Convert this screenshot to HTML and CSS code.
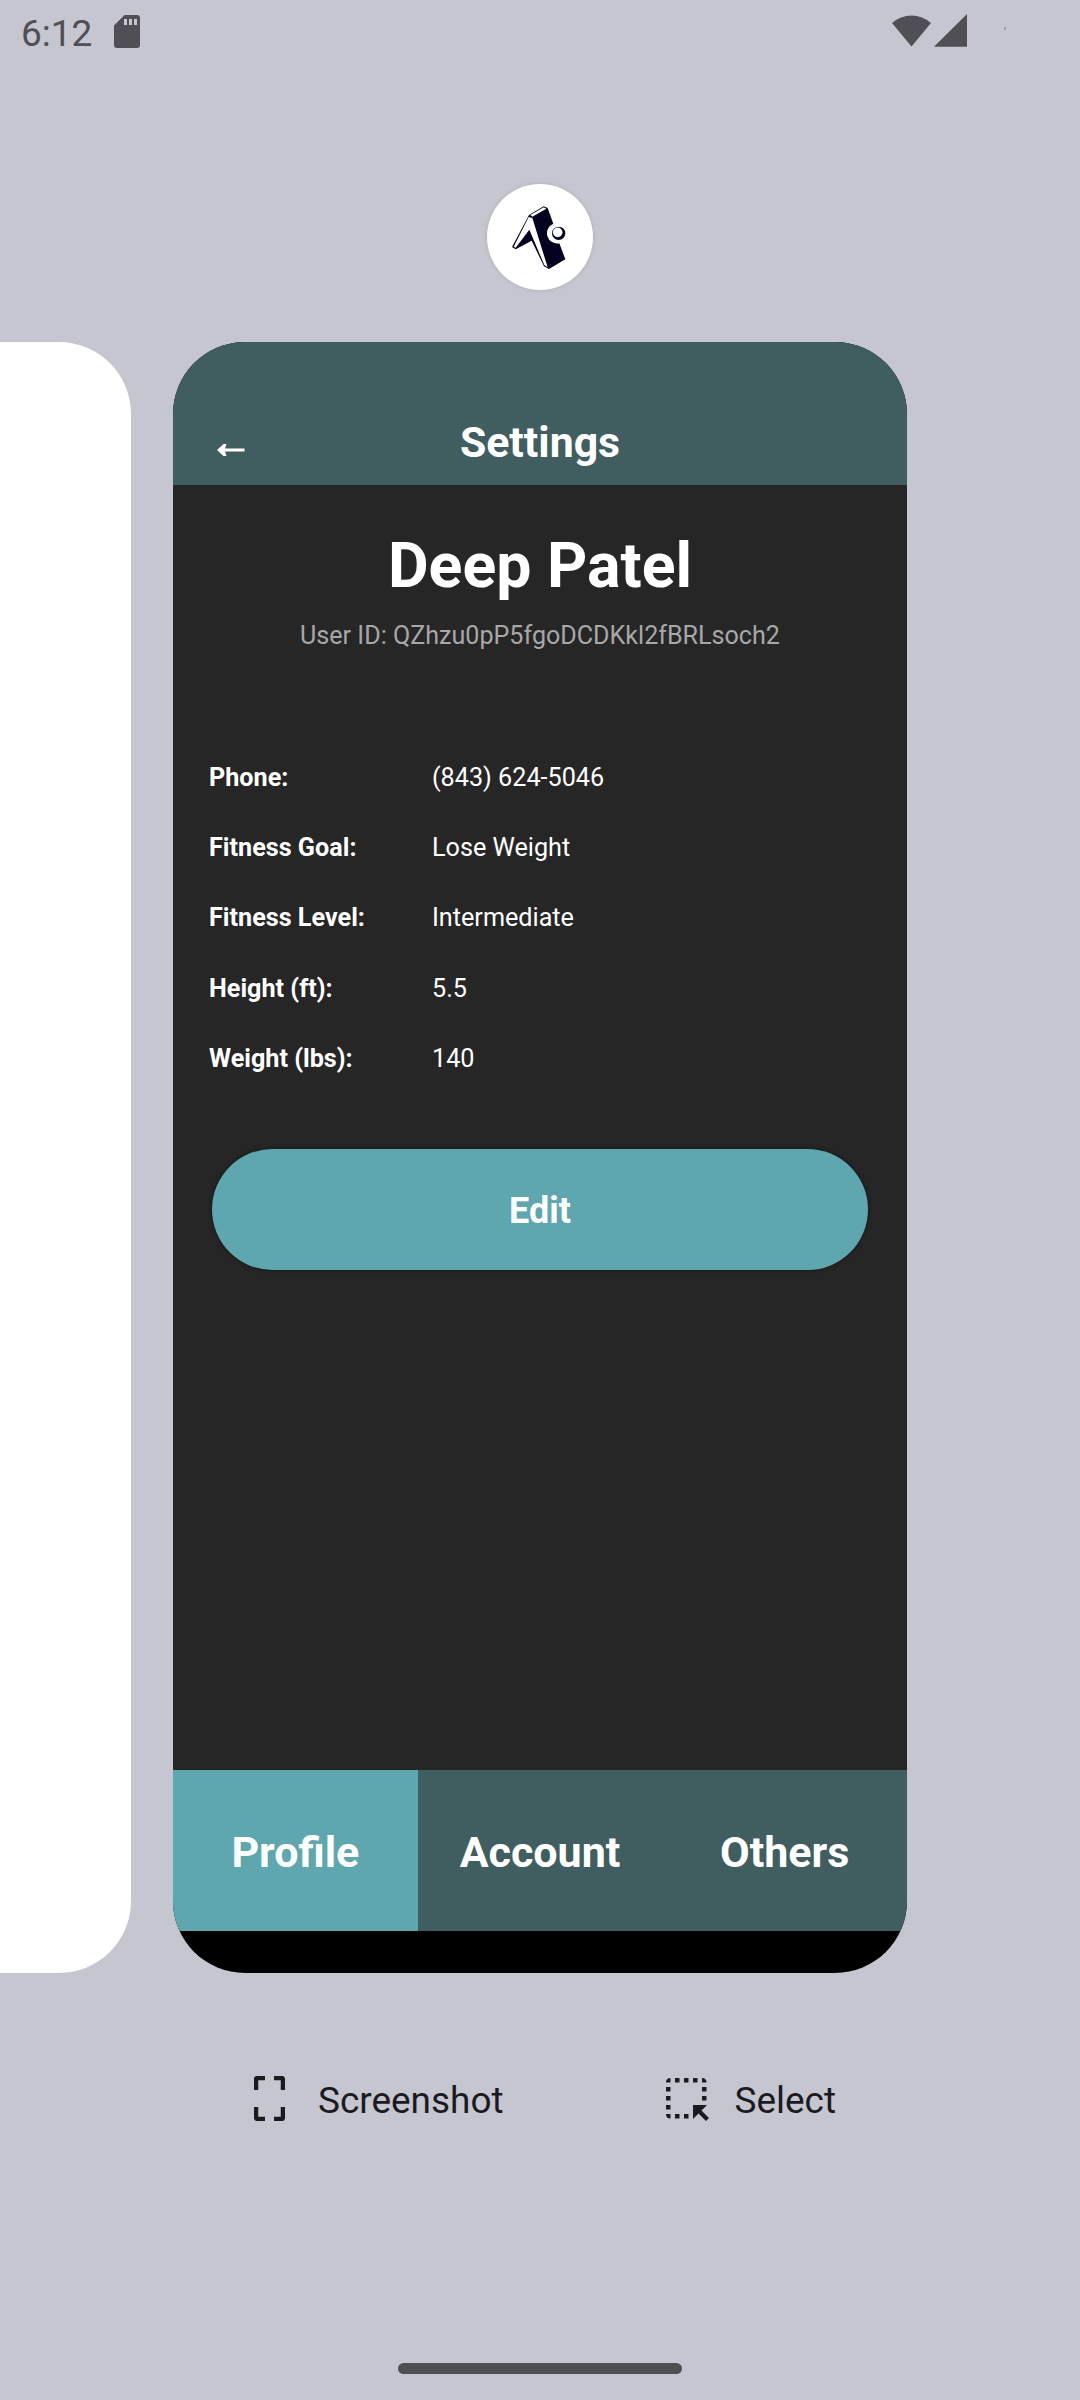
FILE: index.html
```html
<!DOCTYPE html>
<html lang="en">
<head>
<meta charset="utf-8">
<title>Recent apps</title>
<link rel="stylesheet" href="styles.css">
</head>
<body>
<div class="screen">
  <header class="status">
    <span class="clock">6:12</span>
    <svg class="sd" viewBox="0 0 26 33"><path fill-rule="evenodd" d="M10.5 0H23a3 3 0 0 1 3 3V30a3 3 0 0 1-3 3H3a3 3 0 0 1-3-3V10.500ZM10 4v6h3V4ZM15 4v6h3V4ZM20 4v6h3V4Z"/></svg>
    <svg class="signals" viewBox="0 0 115 33"><path d="M0 9A29 29 0 0 1 39 9L19.500 32.500Z"/><path d="M75 0V32.700H42Z"/><path class="dot" d="M112 13h2v3h-2z"/></svg>
  </header>
  <div class="app-icon">
    <svg viewBox="51 41 318 318">
      <path class="ink" d="M187 141L233 113L250 160A31 31 0 0 0 268 219L286 267L237 296L222 288L185 211L137 237L126 230L177 134L221 108L233 113Z"/>
      <path class="paper" d="M181 134L221 111L229 115L187 139Z"/>
      <path class="paper" d="M176 140L131 229L137 232L178 178L223 284L233 291L187 143Z"/>
      <circle class="paper" cx="266" cy="189" r="30"/>
      <circle class="ink" cx="266" cy="189" r="20"/>
      <circle class="paper" cx="263" cy="186" r="14.500"/>
    </svg>
  </div>
  <main class="recents">
    <div class="previous"></div>
    <section class="card">
      <div class="title-bar">
        <svg class="back" viewBox="0 0 28 12"><path d="M0 6L6.500 0H9.500L8 4.500H27.500V7.500H8L9.500 12H6.500Z"/></svg>
        <h1>Settings</h1>
      </div>
      <div class="profile">
        <h2>Deep Patel</h2>
        <p class="user-id">User ID: QZhzu0pP5fgoDCDKkl2fBRLsoch2</p>
        <dl class="details">
          <dt>Phone:</dt><dd>(843) 624-5046</dd>
          <dt>Fitness Goal:</dt><dd>Lose Weight</dd>
          <dt>Fitness Level:</dt><dd>Intermediate</dd>
          <dt>Height (ft):</dt><dd>5.5</dd>
          <dt>Weight (lbs):</dt><dd>140</dd>
        </dl>
        <button class="edit">Edit</button>
      </div>
      <nav class="tabs">
        <span class="tab active">Profile</span>
        <span class="tab">Account</span>
        <span class="tab">Others</span>
      </nav>
    </section>
  </main>
  <div class="actions">
    <div class="action">
      <svg class="shot-icon" viewBox="0 0 31 45"><path d="M2 14V4Q2 2 4 2H11M20 2H27Q29 2 29 4V14M29 31V41Q29 43 27 43H20M11 43H4Q2 43 2 41V31"/></svg>
      <span>Screenshot</span>
    </div>
    <div class="action">
      <svg class="select-icon" viewBox="0 0 43 43"><path d="M4.500 0V4.500H0Q0 0 4.500 0ZM9 0h4.500v4.500H9zM18 0h4.500v4.500H18zM27 0h4.500v4.500H27zM36 0V4.500H40.500Q40.500 0 36 0ZM0 9h4.500v4.500H0zM0 18h4.500v4.500H0zM0 27h4.500v4.500H0zM0 36H4.500V40.500Q0 40.500 0 36ZM36 9h4.500v4.500H36zM36 18h4.500v4.500H36zM9 36h4.500v4.500H9zM18 36h4.500v4.500H18zM27 27H41L35.500 32.500L43 40L40 43L32.500 35.500L27 41Z"/></svg>
      <span>Select</span>
    </div>
  </div>
  <div class="home-bar"></div>
</div>
</body>
</html>
```
FILE: styles.css
```css
* { box-sizing: border-box; }
body { margin: 0; background: #c6c6d0; font-family: Roboto, sans-serif; }
h1, h2, p, dl, dd { margin: 0; }
svg { display: block; flex: none; }

.screen {
  width: 1080px;
  height: 2400px;
  overflow: hidden;
  display: flex;
  flex-direction: column;
}

.status {
  height: 184px;
  padding: 14px 73px 0 21px;
  display: flex;
  align-items: flex-start;
  color: #4f4f54;
  fill: #4f4f54;
}
.clock { width: 93px; font-size: 37px; line-height: 39px; }
.sd { width: 26px; height: 33px; margin-top: 1px; }
.signals { width: 115px; height: 33px; margin-left: auto; }
.dot { fill: #a2a2aa; }

.app-icon {
  align-self: center;
  width: 106px;
  height: 106px;
  border-radius: 50%;
  background: #fff;
  box-shadow: 0 0 4px rgba(0, 0, 0, .12);
}
.ink { fill: #020220; }
.paper { fill: #fff; }

.recents {
  margin-top: 52px;
  height: 1631px;
  display: flex;
  gap: 42px;
}
.previous { width: 131px; background: #fff; border-radius: 0 72px 72px 0; }
.card {
  width: 734px;
  border-radius: 72px;
  overflow: hidden;
  background: #000;
  color: #fff;
  display: flex;
  flex-direction: column;
}

.title-bar {
  position: relative;
  height: 142.700px;
  padding-top: 75px;
  background: #405e60;
  text-align: center;
}
.title-bar h1 { font-size: 42.800px; line-height: 50px; }
.back { position: absolute; left: 44px; top: 102px; width: 28px; height: 12px; fill: #fff; }

.profile {
  flex: 1;
  padding: 43px 36px 0;
  background: #262626;
  display: flex;
  flex-direction: column;
}
.profile h2 { font-size: 62.600px; line-height: 76px; text-align: center; }
.user-id { margin-top: 17px; font-size: 25.100px; line-height: 30px; text-align: center; color: #a8a8a8; }
.details {
  margin-top: 91px;
  display: grid;
  grid-template-columns: 223px 1fr;
  grid-auto-rows: 70.300px;
  font-size: 25.200px;
  line-height: 71px;
}
.details dt { font-weight: 700; }
.edit {
  margin: 56px 3px 0;
  height: 121px;
  padding: 3px 0 0;
  border: 0;
  border-radius: 61px;
  background: #5ea7ae;
  box-shadow: 0 0 4px rgba(0, 0, 0, .45);
  color: #fff;
  font: 700 36px Roboto, sans-serif;
}

.tabs { height: 160.600px; margin-bottom: 42.400px; display: flex; background: #405e60; }
.tab {
  flex: 1;
  padding-top: 2px;
  text-align: center;
  font-size: 43px;
  font-weight: 700;
  line-height: 160px;
}
.tab.active { background: #5ea7ae; }

.actions {
  margin-top: 103px;
  height: 45px;
  padding: 0 244px 0 254px;
  display: flex;
  justify-content: space-between;
  color: #1b1b1f;
}
.action { display: flex; font-size: 36.950px; line-height: 50px; }
.shot-icon { width: 31px; height: 45px; margin-right: 33px; fill: none; stroke: #1b1b1f; stroke-width: 4.500; }
.select-icon { width: 43px; height: 43px; margin: 2px 25px 0 0; fill: #1b1b1f; }

.home-bar {
  align-self: center;
  margin-top: 242px;
  width: 284px;
  height: 11px;
  border-radius: 6px;
  background: #4f4f54;
}
```
